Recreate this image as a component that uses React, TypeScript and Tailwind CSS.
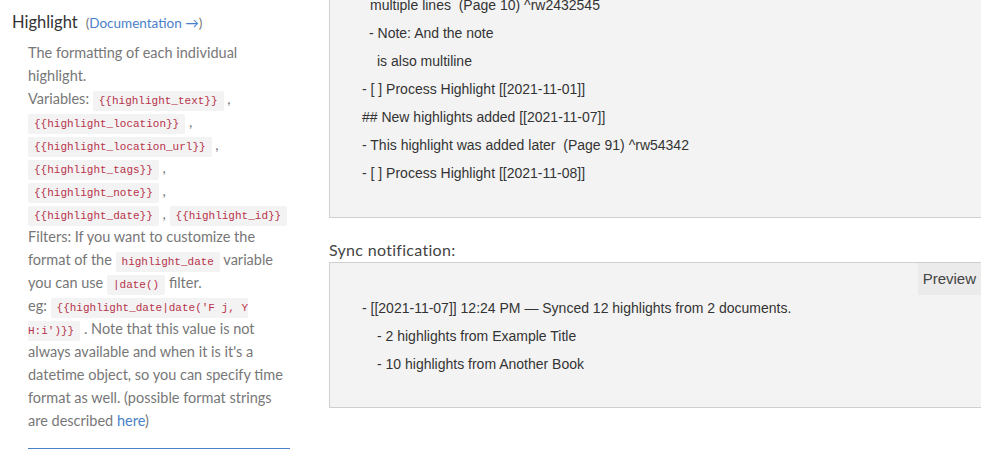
const Code = ({ children }: { children: React.ReactNode }) => (
  <code className="bg-[#f3f3f3] text-[#b8324a] px-[6px] py-[4px] text-[11px] leading-[13px] font-['Liberation_Mono','DejaVu_Sans_Mono',monospace] rounded-[2px]">
    {children}
  </code>
);

const previewLines = [
  { text: "multiple lines  (Page 10) ^rw2432545", indent: "pl-[40px]" },
  { text: "- Note: And the note", indent: "pl-[39px]" },
  { text: "is also multiline", indent: "pl-[47px]" },
  { text: "- [ ] Process Highlight [[2021-11-01]]", indent: "pl-[32px]" },
  { text: "## New highlights added [[2021-11-07]]", indent: "pl-[32px]" },
  { text: "- This highlight was added later  (Page 91) ^rw54342", indent: "pl-[32px]" },
  { text: "- [ ] Process Highlight [[2021-11-08]]", indent: "pl-[32px]" },
];

export default function App() {
  return (
    <div className="w-[981px] h-[450px] overflow-hidden bg-white flex">
      {/* settings description */}
      <div className="w-[329px] shrink-0 pl-[12px] pt-[10px] font-['Lato',sans-serif]">
        <div className="flex items-baseline gap-[8px]">
          <h3 className="text-[16.5px] text-[#333]">Highlight</h3>
          <span className="text-[13.5px] text-[#777]">
            (<a className="text-[#4a80c8]">Documentation →</a>)
          </span>
        </div>
        <div className="pl-[16px] pr-[34px] mt-[6px] text-[14.5px] leading-[23px] text-[#777]">
          <p>
            The formatting of each individual highlight.
            <br />
            Variables: <Code>{"{{highlight_text}}"}</Code> , <Code>{"{{highlight_location}}"}</Code> ,{" "}
            <Code>{"{{highlight_location_url}}"}</Code> , <Code>{"{{highlight_tags}}"}</Code> ,{" "}
            <Code>{"{{highlight_note}}"}</Code> , <Code>{"{{highlight_date}}"}</Code> ,{" "}
            <Code>{"{{highlight_id}}"}</Code>
            <br />
            Filters: If you want to customize the format of the <Code>highlight_date</Code> variable you can use{" "}
            <Code>|date()</Code> filter.
            <br />
            eg: <Code>{"{{highlight_date|date('F j, Y H:i')}}"}</Code> . Note that this value is not always available
            and when it is it's a datetime object, so you can specify time format as well. (possible format strings are
            described <a className="text-[#4a80c8]">here</a>)
          </p>
          <div className="mt-[16px] border-t border-[#4a80c8] w-[262px]" />
        </div>
      </div>

      {/* previews */}
      <div className="flex-1 font-['Liberation_Sans',Arial,sans-serif] text-[14px] text-[#333]">
        <div className="bg-[#f3f3f3] border-l border-b border-[#cfcfcf] -mt-[9px] pb-[30px]">
          {previewLines.map((l) => (
            <div key={l.text} className={`${l.indent} leading-[28px] whitespace-pre`}>
              {l.text}
            </div>
          ))}
        </div>
        <div className="mt-[21px] text-[16px] tracking-[0.3px] text-[#444] font-['Lato',sans-serif] leading-[22px]">
          Sync notification:
        </div>
        <div className="mt-[1px] bg-[#f3f3f3] border-l border-y border-[#cfcfcf] h-[146px] flex flex-col">
          <div className="flex justify-end">
            <button className="bg-[#ebebeb] text-[#444] text-[15px] px-[5px] h-[32px]">Preview</button>
          </div>
          <div className="pl-[32px] leading-[28px] -mt-[1px]">
            <div>- [[2021-11-07]] 12:24 PM — Synced 12 highlights from 2 documents.</div>
            <div className="pl-[15px]">- 2 highlights from Example Title</div>
            <div className="pl-[15px]">- 10 highlights from Another Book</div>
          </div>
        </div>
      </div>
    </div>
  );
}
